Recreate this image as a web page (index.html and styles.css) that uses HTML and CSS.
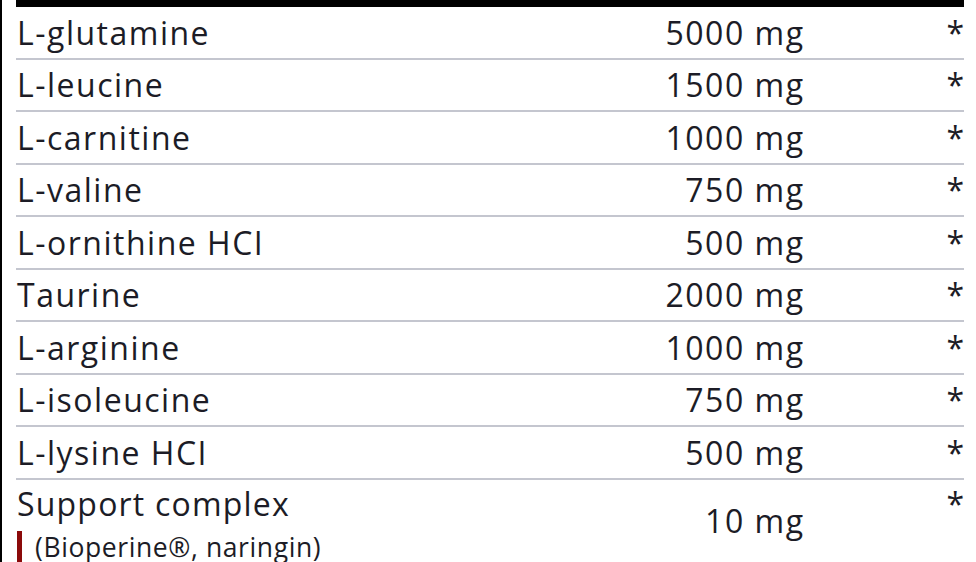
FILE: index.html
```html
<!DOCTYPE html>
<html lang="en">
<head>
<meta charset="utf-8">
<title>Supplement facts</title>
<link rel="stylesheet" href="styles.css">
</head>
<body>
<div class="page">
  <div class="facts">
    <div class="row"><span class="name">L-glutamine</span><span class="amt">5000 mg</span><span class="dv">*</span></div>
    <div class="row"><span class="name">L-leucine</span><span class="amt">1500 mg</span><span class="dv">*</span></div>
    <div class="row"><span class="name">L-carnitine</span><span class="amt">1000 mg</span><span class="dv">*</span></div>
    <div class="row"><span class="name">L-valine</span><span class="amt">750 mg</span><span class="dv">*</span></div>
    <div class="row"><span class="name">L-ornithine HCI</span><span class="amt">500 mg</span><span class="dv">*</span></div>
    <div class="row"><span class="name">Taurine</span><span class="amt">2000 mg</span><span class="dv">*</span></div>
    <div class="row"><span class="name">L-arginine</span><span class="amt">1000 mg</span><span class="dv">*</span></div>
    <div class="row"><span class="name">L-isoleucine</span><span class="amt">750 mg</span><span class="dv">*</span></div>
    <div class="row"><span class="name">L-lysine HCI</span><span class="amt">500 mg</span><span class="dv">*</span></div>
    <div class="row complex">
      <div class="name">
        <div class="main">Support complex</div>
        <div class="sub">(Bioperine®, naringin)</div>
      </div>
      <span class="amt">10 mg</span>
      <span class="dv">*</span>
    </div>
  </div>
</div>
</body>
</html>
```
FILE: styles.css
```css
html, body {
  margin: 0;
  padding: 0;
  background: #ffffff;
}
body {
  border-left: 2px solid #000;
  height: 562px;
  overflow: hidden;
  box-sizing: border-box;
}
.page {
  padding: 0 12px 0 14px;
}
.facts {
  width: 948px;
  border-top: 7px solid #000;
  font-family: "Open Sans", "DejaVu Sans", sans-serif;
  font-size: 32px;
  color: #1c1c26;
  letter-spacing: 1.5px;
}
.row {
  display: grid;
  grid-template-columns: 1fr auto 161px;
  align-items: start;
  box-sizing: border-box;
  height: 52.5px;
  padding: 6.5px 0 0 1px;
  border-bottom: 2px solid #c4c6cf;
  line-height: 38px;
  white-space: nowrap;
}
.amt {
  text-align: right;
  margin-right: -1.5px;
}
.dv {
  text-align: right;
  margin-right: -1.5px;
}
.complex {
  height: auto;
  border-bottom: none;
  padding-top: 3px;
  line-height: 42px;
}
.complex .main {
  letter-spacing: 1.2px;
}
.complex .amt {
  align-self: center;
  margin-top: -4px;
}
.sub {
  border-left: 5px solid #8b0a0a;
  padding-left: 13px;
  margin-top: 6.5px;
  font-size: 26.5px;
  letter-spacing: 0.6px;
  line-height: 32px;
}
```
